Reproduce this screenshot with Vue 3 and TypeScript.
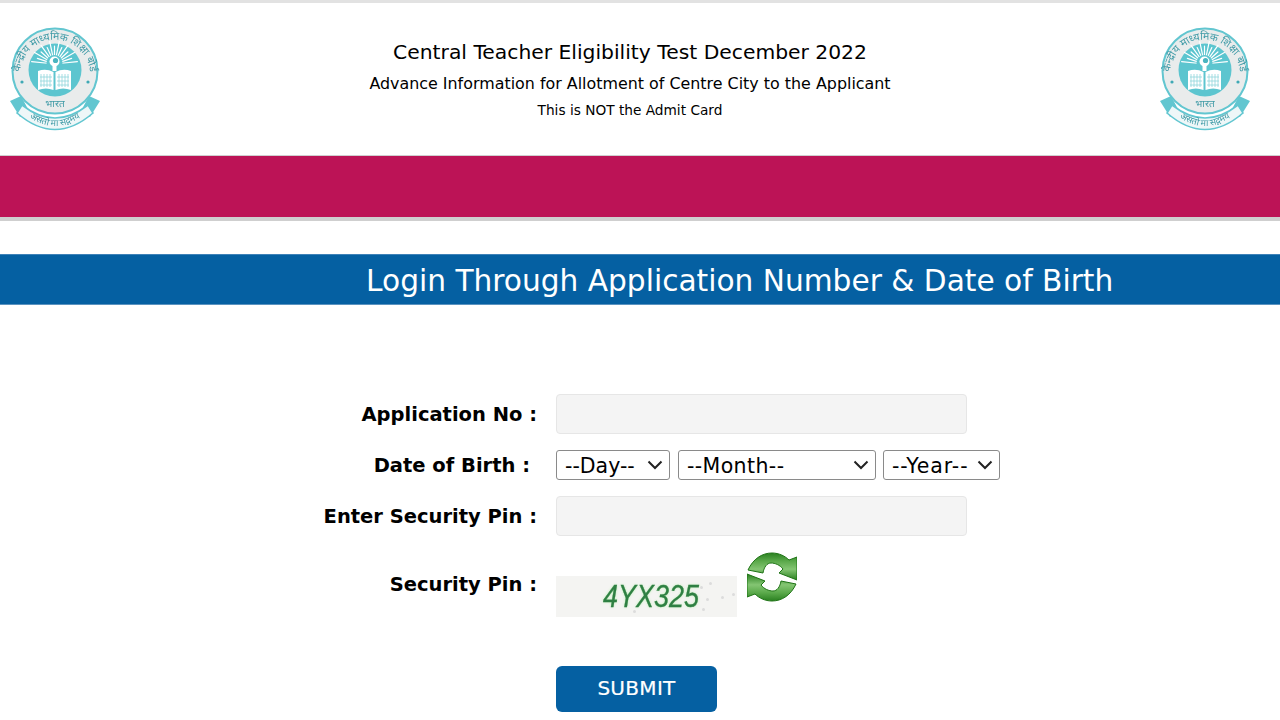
<script setup lang="ts">
const days: string[] = ['--Day--']
const months: string[] = ['--Month--']
const years: string[] = ['--Year--']
const rays: number[] = [-84, -72, -60, -48, -36, -24, -12, 0, 12, 24, 36, 48, 60, 72, 84]
const rayLength = (r: number): number => (Math.abs(r) % 24 === 0 ? 18 : 23)
</script>

<template>
  <div class="page">
    <header class="top">
      <svg class="logo" viewBox="0 0 90 104" width="90" height="104">
        <g id="cbse">
          <path d="M0 74 L11 69 L19 84 L10 90 Z" fill="#62c6d0" />
          <path d="M90 74 L79 69 L71 84 L80 90 Z" fill="#62c6d0" />
          <circle cx="45" cy="44" r="42.5" fill="#e9ecec" stroke="#62c6d0" stroke-width="2" />
          <circle cx="45" cy="43" r="26.5" fill="#5cc5cf" />
          <defs>
            <path id="ringArc" d="M11 56 A35 35 0 1 1 79 56" />
            <path id="ribbonArc" d="M14 86 Q45 112 76 86" />
          </defs>
          <text class="ring-text">
            <textPath href="#ringArc" startOffset="50%" text-anchor="middle">केन्द्रीय माध्यमिक शिक्षा बोर्ड</textPath>
          </text>
          <circle cx="12" cy="55" r="1.6" fill="#3fa9b5" />
          <circle cx="78" cy="55" r="1.6" fill="#3fa9b5" />
          <g stroke="#ffffff" stroke-width="1.2" stroke-linecap="round">
            <line
              v-for="r in rays"
              :key="r"
              x1="44.5"
              y1="30"
              x2="44.5"
              :y2="37 - rayLength(r)"
              :transform="`rotate(${r} 44.5 37)`"
            />
          </g>
          <circle cx="44.5" cy="36" r="8" fill="#5cc5cf" />
          <circle cx="44.5" cy="34.5" r="5" fill="#ffffff" />
          <circle cx="45.5" cy="33.5" r="2.6" fill="#4bb5c1" />
          <path d="M42.5 38 H46.5 V44 H42.5 Z" fill="#ffffff" />
          <path d="M28 44 Q36 41 43.5 45 V63 Q36 60 28 63 Z" fill="#ffffff" />
          <path d="M61 44 Q53 41 45.5 45 V63 Q53 60 61 63 Z" fill="#ffffff" />
          <g stroke="#8fd5dc" stroke-width="0.8">
            <path d="M31 47 V60 M34 47 V60 M37 47 V60 M40 47 V60" />
            <path d="M49 47 V60 M52 47 V60 M55 47 V60 M58 47 V60" />
            <path d="M30 50 H42 M30 54 H42 M30 58 H42 M47 50 H59 M47 54 H59 M47 58 H59" />
          </g>
          <text class="bharat" x="45" y="80" text-anchor="middle">भारत</text>
          <path d="M12 78 Q45 104 78 78 L83 86 Q45 119 7 86 Z" fill="#eef7f8" stroke="#62c6d0" stroke-width="1.6" />
          <text class="ribbon-text">
            <textPath href="#ribbonArc" startOffset="50%" text-anchor="middle">असतो मा सद्गमय</textPath>
          </text>
        </g>
      </svg>
      <div class="titles">
        <h1>Central Teacher Eligibility Test December 2022</h1>
        <h2>Advance Information for Allotment of Centre City to the Applicant</h2>
        <h3>This is NOT the Admit Card</h3>
      </div>
      <svg class="logo" viewBox="0 0 90 104" width="90" height="104">
        <use href="#cbse" />
      </svg>
    </header>

    <div class="crimson"></div>

    <div class="blue">Login Through Application Number &amp; Date of Birth</div>

    <form class="form" @submit.prevent>
      <label class="lbl">Application No :</label>
      <input class="field" type="text" />

      <label class="lbl lbl-dob">Date of Birth :</label>
      <div class="dob">
        <select class="sel day"><option v-for="d in days" :key="d">{{ d }}</option></select>
        <select class="sel month"><option v-for="m in months" :key="m">{{ m }}</option></select>
        <select class="sel year"><option v-for="y in years" :key="y">{{ y }}</option></select>
      </div>

      <label class="lbl">Enter Security Pin :</label>
      <input class="field" type="text" />

      <label class="lbl">Security Pin :</label>
      <div class="captcha-row">
        <div class="captcha">
          <span class="captcha-text">4YX325</span>
          <i class="speck s1"></i><i class="speck s2"></i><i class="speck s3"></i><i class="speck s4"></i><i class="speck s5"></i><i class="speck s6"></i><i class="speck s7"></i>
        </div>
        <svg class="refresh" viewBox="0 0 50 50" width="50" height="50">
          <defs>
            <linearGradient id="gradA" x1="0" y1="0" x2="0" y2="1">
              <stop offset="0" stop-color="#2a8020" />
              <stop offset="0.3" stop-color="#5aa94a" />
              <stop offset="0.6" stop-color="#84c573" />
              <stop offset="1" stop-color="#2a8020" />
            </linearGradient>
            <path id="refreshArm" d="M1 18 C6 7 15 1 25 1 C32 1 38 4 42 8 L50 5 L50 28 L32 21 L36 17 C33 13 28 11 24 11 C20 11 17 15 16 21 Z" />
          </defs>
          <use href="#refreshArm" fill="url(#gradA)" stroke="#1f7416" stroke-width="1" />
          <use href="#refreshArm" fill="url(#gradA)" stroke="#1f7416" stroke-width="1" transform="rotate(180 25 25)" />
        </svg>
      </div>

      <span></span>
      <button class="submit" type="submit">SUBMIT</button>
    </form>
  </div>
</template>

<style>
html, body { margin: 0; padding: 0; background: #fff; overflow: hidden; }
</style>

<style scoped>
.page {
  width: 1280px;
  height: 720px;
  overflow: hidden;
  font-family: "DejaVu Sans", Verdana, sans-serif;
  color: #000;
  background: #fff;
}
.top {
  box-sizing: border-box;
  height: 155px;
  border-top: 3px solid #e2e2e2;
  padding: 24px 30px 0 10px;
  display: flex;
  justify-content: space-between;
  align-items: flex-start;
}
.logo { display: block; flex: none; filter: blur(0.4px); }
.titles {
  text-align: center;
  padding-top: 12px;
  display: flex;
  flex-direction: column;
  align-items: center;
}
.titles h1, .titles h2, .titles h3 { margin: 0; font-weight: 400; white-space: nowrap; }
.titles h1 { font-size: 20.3px; line-height: 26px; }
.titles h2 { font-size: 15.9px; line-height: 20px; margin-top: 9px; }
.titles h3 { font-size: 13.7px; line-height: 16px; margin-top: 8px; }
.ring-text { font-family: "Noto Sans", "DejaVu Sans", sans-serif; font-size: 10.5px; fill: #3f9aa6; }
.bharat { font-family: "Noto Sans", "DejaVu Sans", sans-serif; font-size: 10px; fill: #3f9aa6; }
.ribbon-text { font-family: "Noto Sans", "DejaVu Sans", sans-serif; font-size: 9px; fill: #3f9aa6; }
.crimson {
  height: 61px;
  background: #bc1356;
  border-top: 1px solid #cfcfcf;
  border-bottom: 4px solid #cfcfcf;
}
.blue {
  box-sizing: border-box;
  margin-top: 33px;
  height: 51px;
  line-height: 52px;
  background: #0560a2;
  border-top: 1px solid #3f82b8;
  border-bottom: 1px solid #5b93c0;
  color: #fff;
  font-size: 29.65px;
  padding-left: 366px;
  white-space: nowrap;
}
.form {
  padding-top: 89px;
  display: grid;
  grid-template-columns: 537px 1fr;
  column-gap: 19px;
  row-gap: 16px;
  align-items: center;
}
.lbl {
  text-align: right;
  font-size: 19.5px;
  font-weight: 700;
  white-space: nowrap;
}
.lbl-dob { padding-right: 7px; }
.field {
  box-sizing: border-box;
  width: 411px;
  height: 40px;
  background: #f4f4f4;
  border: 1px solid #e6e6e6;
  border-radius: 4px;
  outline: none;
  padding: 0 10px;
}
.dob { display: flex; height: 30px; }
.sel {
  box-sizing: border-box;
  height: 30px;
  font-family: "DejaVu Sans", Verdana, sans-serif;
  font-size: 20.5px;
  color: #000;
  background-color: #fff;
  border: 1px solid #8a8a8a;
  border-radius: 3px;
  padding: 2px 0 0 8px;
  appearance: none;
  background-image: url("data:image/svg+xml,%3Csvg xmlns='http://www.w3.org/2000/svg' width='16' height='10'%3E%3Cpath d='M1.5 1.5 L8 8 L14.5 1.5' fill='none' stroke='%23222' stroke-width='2'/%3E%3C/svg%3E");
  background-repeat: no-repeat;
  background-position: right 6px center;
}
.day { width: 114px; margin-right: 8px; }
.month { width: 198px; margin-right: 7px; letter-spacing: 0.4px; }
.year { width: 117px; letter-spacing: 0.9px; }
.captcha-row { display: flex; align-items: flex-start; gap: 10px; height: 65px; }
.captcha {
  position: relative;
  margin-top: 24px;
  width: 181px;
  height: 41px;
  background: #f4f4f2;
  overflow: hidden;
}
.captcha-text {
  position: absolute;
  left: 47px;
  top: 3px;
  font-family: "Liberation Sans", Arial, sans-serif;
  font-style: italic;
  font-size: 31px;
  line-height: 36px;
  color: #2f8043;
  -webkit-text-stroke: 0.3px #2f8043;
  text-shadow: 0 0 3px #b6f0ae;
  transform: scaleX(0.87);
  transform-origin: left center;
  white-space: nowrap;
  filter: blur(0.35px);
}
.speck { position: absolute; width: 3px; height: 3px; border-radius: 50%; background: #dcdcdc; }
.s1 { left: 153px; top: 6px; }
.s2 { left: 165px; top: 20px; }
.s3 { left: 150px; top: 22px; }
.s4 { left: 77px; top: 34px; }
.s5 { left: 176px; top: 17px; }
.s6 { left: 144px; top: 10px; }
.s7 { left: 146px; top: 32px; }
.refresh { display: block; flex: none; }
.submit {
  margin-top: 33px;
  box-sizing: border-box;
  width: 161px;
  height: 46px;
  padding-bottom: 4px;
  background: #0560a2;
  color: #fff;
  border: none;
  border-radius: 6px;
  font-family: "DejaVu Sans", Verdana, sans-serif;
  font-size: 20px;
  letter-spacing: 0.3px;
  -webkit-text-stroke: 0.2px #fff;
  cursor: pointer;
}
</style>
